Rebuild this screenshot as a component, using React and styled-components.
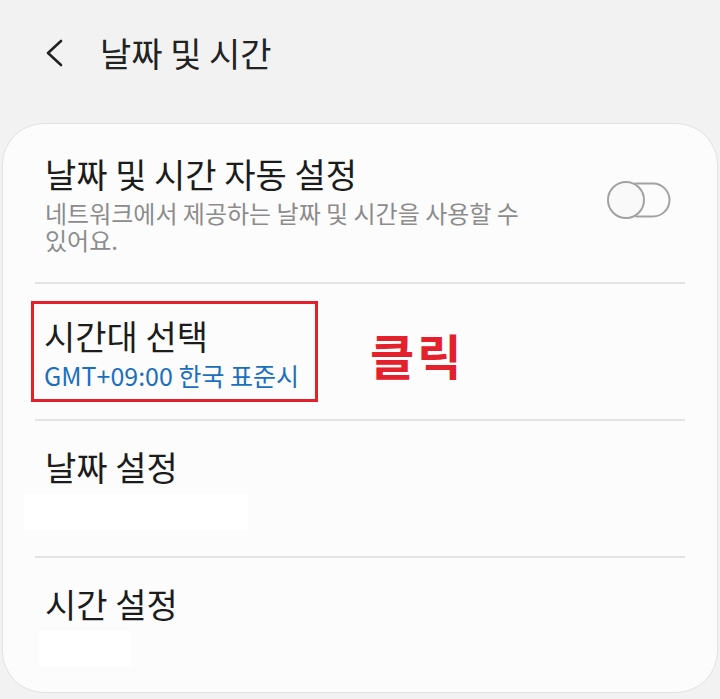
import styled, { createGlobalStyle } from 'styled-components';

const GlobalStyle = createGlobalStyle`
  html, body {
    margin: 0;
    padding: 0;
    background: #f2f2f2;
    font-family: "Noto Sans CJK KR", "Noto Sans", sans-serif;
  }
`;

const Page = styled.div`
  width: 720px;
  height: 699px;
  overflow: hidden;
  background: #f2f2f2;
`;

const Header = styled.header`
  height: 123px;
  display: flex;
  align-items: center;
  padding: 0 0 18px 42px;
  box-sizing: border-box;
`;

const BackButton = styled.button`
  border: 0;
  background: none;
  padding: 0;
  width: 26px;
  height: 30px;
  margin-right: 32px;
  display: flex;
  align-items: center;
`;

const Title = styled.h1`
  margin: 0;
  font-size: 34px;
  font-weight: 400;
  color: #222;
`;

const Card = styled.div`
  margin: 0 2px;
  height: 570px;
  background: #fcfcfc;
  border: 1px solid #e2e2e2;
  border-radius: 42px;
  box-sizing: border-box;
  display: flex;
  flex-direction: column;
`;

const Row = styled.div`
  height: ${(p) => p.$height}px;
  display: flex;
  align-items: center;
  justify-content: ${(p) => p.$justify || 'flex-start'};
  padding: ${(p) => p.$pad || '0 46px 0 42px'};
  box-sizing: border-box;
`;

const Texts = styled.div`
  max-width: ${(p) => p.$max || 'none'};
  display: flex;
  flex-direction: column;
`;

const ItemTitle = styled.div`
  font-size: 34px;
  line-height: 42px;
  color: #1c1c1c;
  padding-left: ${(p) => p.$indent || 0}px;
`;

const Sub = styled.div`
  font-size: ${(p) => p.$size || 24}px;
  line-height: 27px;
  color: ${(p) => p.$color || '#8c8c8c'};
  margin-top: ${(p) => p.$mt || 4}px;
  word-break: keep-all;
`;

const Redacted = styled.div`
  width: ${(p) => p.$w}px;
  height: 36px;
  background: #ffffff;
  margin-top: 6px;
  margin-left: ${(p) => p.$ml}px;
`;

const Divider = styled.hr`
  margin: 0 32px;
  border: 0;
  height: 2px;
  background: #e4e4e4;
`;

const Highlight = styled.div`
  border: 3px solid #e3202b;
  padding: 11px 16px 10px 10px;
  display: flex;
  flex-direction: column;
`;

const ClickLabel = styled.span`
  font-size: 48px;
  font-weight: 700;
  color: #e3202b;
  letter-spacing: 3px;
  margin-left: 52px;
  margin-top: 4px;
`;

const Toggle = styled.div`
  width: 64px;
  height: 38px;
  flex: none;
  margin-top: -6px;
`;

function Switch() {
  return (
    <Toggle>
      <svg width="64" height="38" viewBox="0 0 64 38">
        <rect x="14" y="2.5" width="48.5" height="33" rx="16.5" fill="#fcfcfc" stroke="#a2a2a2" strokeWidth="2" />
        <circle cx="19" cy="19" r="18" fill="#f9f9f9" stroke="#a2a2a2" strokeWidth="2" />
      </svg>
    </Toggle>
  );
}

export default function App() {
  return (
    <Page>
      <GlobalStyle />
      <Header>
        <BackButton aria-label="뒤로">
          <svg width="26" height="30" viewBox="0 0 26 30">
            <path d="M19 3 L6 15 L19 27" fill="none" stroke="#222" strokeWidth="2.6" strokeLinecap="round" strokeLinejoin="round" />
          </svg>
        </BackButton>
        <Title>날짜 및 시간</Title>
      </Header>
      <Card>
        <Row $height={159} $justify="space-between">
          <Texts $max="520px">
            <ItemTitle>날짜 및 시간 자동 설정</ItemTitle>
            <Sub>네트워크에서 제공하는 날짜 및 시간을 사용할 수 있어요.</Sub>
          </Texts>
          <Switch />
        </Row>
        <Divider />
        <Row $height={135} $pad="0 0 0 28px">
          <Highlight>
            <ItemTitle>시간대 선택</ItemTitle>
            <Sub $color="#1b6fbf" $size={25} $mt={5}>GMT+09:00 한국 표준시</Sub>
          </Highlight>
          <ClickLabel>클릭</ClickLabel>
        </Row>
        <Divider />
        <Row $height={135} $pad="0">
          <Texts>
            <ItemTitle $indent={42}>날짜 설정</ItemTitle>
            <Redacted $w={224} $ml={21} />
          </Texts>
        </Row>
        <Divider />
        <Row $height={135} $pad="0">
          <Texts>
            <ItemTitle $indent={42}>시간 설정</ItemTitle>
            <Redacted $w={91} $ml={36} />
          </Texts>
        </Row>
      </Card>
    </Page>
  );
}
